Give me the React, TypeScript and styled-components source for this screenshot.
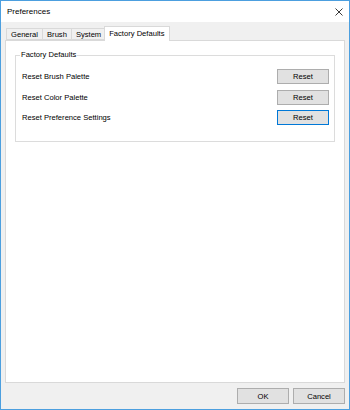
import React from 'react';
import styled, { createGlobalStyle } from 'styled-components';

const GlobalStyle = createGlobalStyle`
  html, body {
    margin: 0;
    padding: 0;
    background: #ffffff;
  }
  * {
    box-sizing: border-box;
  }
`;

const Window = styled.div`
  width: 350px;
  height: 410px;
  border: 1px solid #4c9fdf;
  display: flex;
  flex-direction: column;
  font-family: 'Liberation Sans', Arial, sans-serif;
  font-size: 7.6px;
  color: #000;
`;

const TitleBar = styled.div`
  height: 21px;
  background: #ffffff;
  display: flex;
  align-items: center;
  justify-content: space-between;
  padding: 0 5px 0 6px;
`;

const Title = styled.span`
  font-size: 8px;
  color: #000;
`;

const CloseIcon = styled.svg`
  width: 10px;
  height: 10px;
  display: block;
`;

const Body = styled.div`
  flex: 1;
  background: #f0f0f0;
  padding: 4px 4px 5px 4px;
  display: flex;
  flex-direction: column;
`;

const TabStrip = styled.div`
  height: 14px;
  display: flex;
  align-items: flex-end;
  padding-left: 1px;
  position: relative;
  z-index: 1;
`;

const Tab = styled.div<{ $active?: boolean }>`
  height: ${(p) => (p.$active ? '15px' : '12px')};
  padding: 0 4px ${(p) => (p.$active ? '1px' : '0')};
  margin: 0 ${(p) => (p.$active ? '-2px' : '0')} ${(p) => (p.$active ? '-1px' : '0')};
  margin-left: ${(p) => (p.$active ? '-2px' : '-1px')};
  border: 1px solid #d9d9d9;
  border-bottom: ${(p) => (p.$active ? 'none' : '1px solid #d9d9d9')};
  background: ${(p) => (p.$active ? '#ffffff' : '#f0f0f0')};
  display: flex;
  align-items: center;
  position: relative;
  z-index: ${(p) => (p.$active ? 2 : 1)};
  white-space: nowrap;
  &:first-child {
    margin-left: 0;
  }
`;

const Panel = styled.div`
  height: 343px;
  background: #ffffff;
  border: 1px solid #d9d9d9;
  padding: 14px 9px 0 9px;
`;

const Group = styled.div`
  position: relative;
  border: 1px solid #dcdcdc;
  padding: 13px 5px 16px 6px;
  display: flex;
  flex-direction: column;
  gap: 5.5px;
`;

const Legend = styled.span`
  position: absolute;
  top: -6px;
  left: 4px;
  background: #ffffff;
  padding: 0 1px;
  line-height: 10px;
`;

const Row = styled.div`
  height: 15px;
  display: flex;
  align-items: center;
  justify-content: space-between;
`;

const Button = styled.button<{ $focused?: boolean }>`
  width: 52px;
  height: 15px;
  padding: 0;
  margin: 0;
  background: #e1e1e1;
  border: 1px solid ${(p) => (p.$focused ? '#0078d7' : '#adadad')};
  font-family: 'Liberation Sans', Arial, sans-serif;
  font-size: 7.6px;
  color: #000;
  display: flex;
  align-items: center;
  justify-content: center;
`;

const Footer = styled.div`
  margin-top: 5px;
  display: flex;
  justify-content: flex-end;
  gap: 4px;
`;

const FooterButton = styled(Button)`
  height: 16px;
`;

const rows = [
  { label: 'Reset Brush Palette' },
  { label: 'Reset Color Palette' },
  { label: 'Reset Preference Settings', focused: true },
];

export default function App() {
  return (
    <>
      <GlobalStyle />
      <Window>
        <TitleBar>
          <Title>Preferences</Title>
          <CloseIcon viewBox="0 0 10 10">
            <path d="M1.5 1.5 L8.5 8.5 M8.5 1.5 L1.5 8.5" stroke="#222" strokeWidth="0.9" fill="none" />
          </CloseIcon>
        </TitleBar>
        <Body>
          <TabStrip>
            <Tab>General</Tab>
            <Tab>Brush</Tab>
            <Tab>System</Tab>
            <Tab $active>Factory Defaults</Tab>
          </TabStrip>
          <Panel>
            <Group>
              <Legend>Factory Defaults</Legend>
              {rows.map((r) => (
                <Row key={r.label}>
                  <span>{r.label}</span>
                  <Button $focused={r.focused}>Reset</Button>
                </Row>
              ))}
            </Group>
          </Panel>
          <Footer>
            <FooterButton>OK</FooterButton>
            <FooterButton>Cancel</FooterButton>
          </Footer>
        </Body>
      </Window>
    </>
  );
}
